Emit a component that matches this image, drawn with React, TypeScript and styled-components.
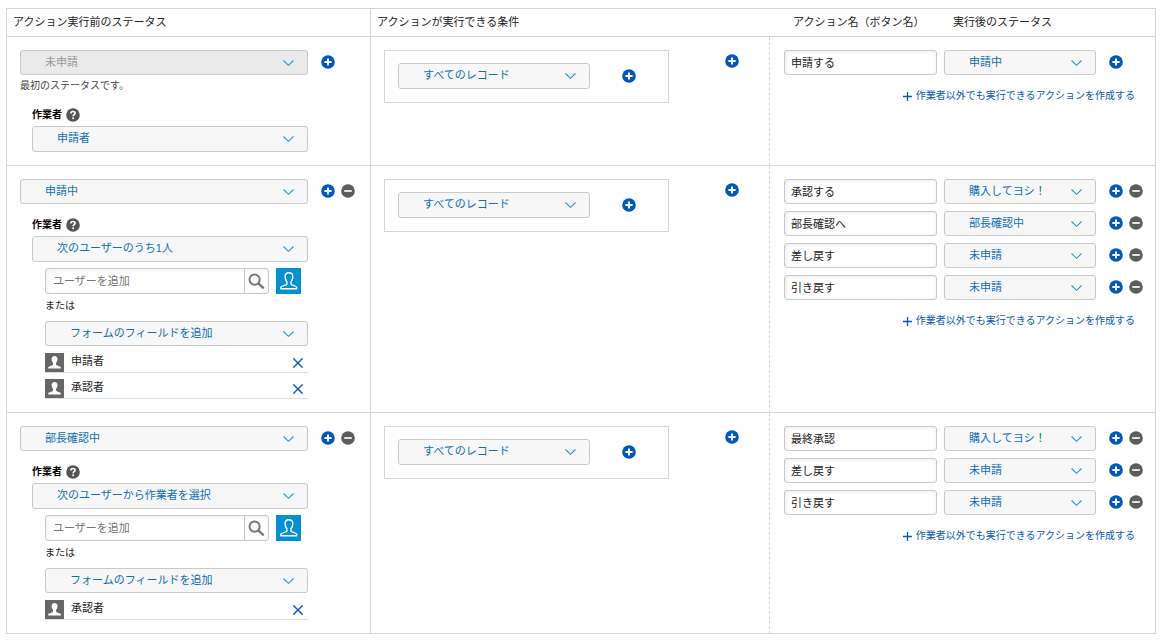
import React from "react";
import styled, { createGlobalStyle } from "styled-components";

const GlobalStyle = createGlobalStyle`
  * { box-sizing: border-box; }
  body {
    margin: 0;
    background: #fff;
    color: #222;
    font-family: "Liberation Sans", "Noto Sans CJK JP", sans-serif;
    font-size: 11px;
    line-height: 16px;
  }
  button, input, select { font: inherit; margin: 0; }
`;

const Page = styled.main`
  padding: 8px 6px;
`;

const FlowTable = styled.table`
  width: 100%;
  table-layout: fixed;
  border-collapse: separate;
  border-spacing: 0;
  border-top: 1px solid #d5d5d5;
  border-left: 1px solid #d5d5d5;
`;

const StatusCol = styled.col`
  width: 364px;
`;

const ConditionCol = styled.col`
  width: 399px;
`;

const HeadCell = styled.th<{ $open?: boolean; $inset?: number }>`
  padding: 5px 0 6px ${(p) => p.$inset ?? 6}px;
  border-bottom: 1px solid #d5d5d5;
  border-right: ${(p) => (p.$open ? "0" : "1px solid #d5d5d5")};
  font-weight: 400;
  text-align: left;
`;

const Cell = styled.td<{ $dashed?: boolean }>`
  padding: 13px 12px 13px 13px;
  vertical-align: top;
  border-bottom: 1px solid #d5d5d5;
  border-right: 1px ${(p) => (p.$dashed ? "dashed" : "solid")} #d5d5d5;
`;

const ActionCell = styled(Cell)`
  padding-left: 14px;
`;

const ActionHead = styled.div`
  display: grid;
  grid-template-columns: 1fr 152px 34px;
  column-gap: 7px;
  padding-right: 18px;

  span {
    padding-left: 9px;
    white-space: nowrap;
  }
`;

const StatusLayout = styled.div`
  display: grid;
  grid-template-columns: 1fr 34px;
  column-gap: 13px;
  padding-right: 3px;
`;

const IconPair = styled.div`
  display: flex;
  align-items: center;
  gap: 6px;
  height: 24px;
`;

const IconButton = styled.button`
  display: block;
  flex: none;
  padding: 0;
  border: 0;
  background: none;
  cursor: pointer;

  svg { display: block; }
`;

const SelectBox = styled.div<{ $tall?: boolean }>`
  position: relative;
  height: ${(p) => (p.$tall ? 26 : 25)}px;

  svg {
    position: absolute;
    top: 10px;
    right: 14px;
    pointer-events: none;
  }
`;

const SelectControl = styled.select`
  display: block;
  width: 100%;
  height: 100%;
  padding: 0 28px 2px 24px;
  appearance: none;
  border: 1px solid #c9c9c9;
  border-radius: 3px;
  background: #f7f7f7;
  color: #0d6fb8;
  line-height: 16px;

  &:disabled {
    background: #eaeaea;
    color: #999;
    opacity: 1;
  }
`;

const Note = styled.p`
  margin: 3px 0 0;
  font-size: 10px;
  line-height: 16px;
  color: #444;
`;

const Worker = styled.section`
  margin-top: 14px;
  padding-left: 12px;
`;

const WorkerHead = styled.div`
  display: flex;
  align-items: center;
  gap: 4px;
  height: 14px;
  margin-bottom: 4px;
  font-size: 10px;
  line-height: 14px;
`;

const WorkerTitle = styled.strong`
  font-weight: 700;
  color: #000;
`;

const Picker = styled.div`
  padding: 6px 0 0 13px;
`;

const SearchRow = styled.div`
  display: flex;
  gap: 7px;
  height: 26px;
`;

const SearchField = styled.div`
  display: flex;
  width: 224px;
  border: 1px solid #c9c9c9;
  border-radius: 3px;
  box-shadow: inset 1px 1px 4px #ececec;
`;

const SearchInput = styled.input`
  flex: 1;
  min-width: 0;
  padding: 0 7px 1px;
  border: 0;
  background: none;
  color: #333;

  &::placeholder {
    color: #757575;
    opacity: 1;
  }
`;

const SearchButton = styled(IconButton)`
  width: 24px;
  padding-left: 3px;
  border-left: 1px solid #c9c9c9;
`;

const DirectoryButton = styled(IconButton)`
  width: 25px;
  height: 26px;
  background: #0390d5;
`;

const OrText = styled.p`
  margin: 5px 0 8px;
  font-size: 10px;
  line-height: 14px;
`;

const FieldList = styled.ul`
  display: grid;
  gap: 6px;
  margin: 7px 0 0;
  padding: 0;
  list-style: none;
`;

const FieldItem = styled.li`
  display: flex;
  align-items: center;
  gap: 7px;
  height: 20px;
  padding-right: 5px;
  border-bottom: 1px solid #d8dfdf;

  svg { flex: none; display: block; }
`;

const FieldName = styled.span`
  flex: 1;
  padding-bottom: 4px;
`;

const ConditionLayout = styled.div`
  display: flex;
  gap: 56px;
`;

const ConditionBox = styled.div`
  display: flex;
  align-items: center;
  gap: 32px;
  width: 285px;
  height: 53px;
  padding: 12px 13px 13px;
  border: 1px solid #d5d5d5;
`;

const ConditionSelect = styled.div`
  width: 192px;
`;

const AddCondition = styled.div`
  padding-top: 4px;
`;

const ActionRow = styled.div`
  display: grid;
  grid-template-columns: 1fr 152px 34px;
  column-gap: 7px;
  margin-bottom: 7px;

  ${IconPair} { margin-left: 6px; }
`;

const ActionName = styled.input`
  width: 100%;
  min-width: 0;
  height: 25px;
  padding: 0 6px 1px;
  border: 1px solid #c9c9c9;
  border-radius: 3px;
  box-shadow: inset 1px 1px 4px #ececec;
  background: #fff;
  color: #222;
`;

const ActionList = styled.div`
  padding-right: 6px;
`;

const LinkRow = styled.div`
  display: flex;
  justify-content: flex-end;
  margin-top: 14px;
  padding-right: 8px;
`;

const AddLink = styled.a`
  display: flex;
  align-items: center;
  gap: 4px;
  font-size: 10px;
  line-height: 14px;
  white-space: nowrap;
  color: #0558b8;
  text-decoration: none;
`;

const AddButton = () => (
  <IconButton type="button" aria-label="追加">
    <svg width="14" height="14" viewBox="0 0 14 14">
      <circle cx="7" cy="7" r="6.8" fill="#0058bc" />
      <path d="M7 3.4v7.2M3.4 7h7.2" stroke="#fff" strokeWidth="1.9" />
    </svg>
  </IconButton>
);

const RemoveButton = () => (
  <IconButton type="button" aria-label="削除">
    <svg width="14" height="14" viewBox="0 0 14 14">
      <circle cx="7" cy="7" r="6.8" fill="#5c5c5c" />
      <path d="M3.2 7h7.6" stroke="#e6e6e6" strokeWidth="2" />
    </svg>
  </IconButton>
);

const HelpButton = () => (
  <IconButton type="button" aria-label="ヘルプ">
    <svg width="14" height="14" viewBox="0 0 14 14">
      <circle cx="7" cy="7" r="6.8" fill="#555" />
      <path
        d="M4.9 5.5C4.9 4.2 5.8 3.5 7 3.5s2.1.7 2.1 1.8c0 1.4-2 1.4-2 3"
        fill="none"
        stroke="#fff"
        strokeWidth="1.6"
      />
      <circle cx="7.1" cy="10.2" r="1" fill="#fff" />
    </svg>
  </IconButton>
);

const Dropdown = ({
  label,
  value,
  disabled,
  tall,
}: {
  label: string;
  value: string;
  disabled?: boolean;
  tall?: boolean;
}) => (
  <SelectBox $tall={tall}>
    <SelectControl aria-label={label} defaultValue={value} disabled={disabled}>
      <option>{value}</option>
    </SelectControl>
    <svg width="11" height="6" viewBox="0 0 11 6">
      <path d="M.5.5l5 4.8 5-4.8" fill="none" stroke="#2597d8" strokeWidth="1.1" />
    </svg>
  </SelectBox>
);

const UserSearch = () => (
  <SearchRow>
    <SearchField>
      <SearchInput type="text" aria-label="ユーザーを追加" placeholder="ユーザーを追加" />
      <SearchButton type="button" aria-label="検索">
        <svg width="17" height="17" viewBox="0 0 17 17">
          <circle cx="6.6" cy="6.6" r="5.1" fill="none" stroke="#777" strokeWidth="1.9" />
          <path d="M10.3 10.3l5.4 5" stroke="#777" strokeWidth="2.4" />
        </svg>
      </SearchButton>
    </SearchField>
    <DirectoryButton type="button" aria-label="ユーザーを選択">
      <svg width="25" height="26" viewBox="0 0 25 26">
        <path
          d="M12.9 4.8c-2.6 0-3.8 1.7-3.8 4 0 2.2.8 3.7 1.8 4.9v2.5c0 .9-5.9 1.6-6.1 2.9v1.7h15.9v-1.7c-.2-1.3-5.7-2-5.7-2.9v-2.5c1-1.2 1.8-2.7 1.8-4.9 0-2.3-1.3-4-3.9-4z"
          fill="none"
          stroke="#fff"
          strokeWidth="1.4"
          strokeLinejoin="round"
        />
      </svg>
    </DirectoryButton>
  </SearchRow>
);

const PersonTile = () => (
  <svg width="19" height="19" viewBox="0 0 19 19">
    <rect width="19" height="19" fill="#666" />
    <path
      d="M9.5 3C7.5 3 6.6 4.4 6.6 6.1c0 1.7.6 2.9 1.4 3.7v1.9C8 12.6 3.6 13 3.3 14.2V15.6h12.500v-1.4c-.3-1.2-4.7-1.6-4.7-2.5V9.8c.8-.8 1.4-2 1.4-3.700C12.500 4.400 11.500 3 9.500 3z"
      fill="#fff"
    />
  </svg>
);

type Step = {
  status: string;
  note?: string;
  worker: string;
  fields?: string[];
  actions: { name: string; next: string }[];
};

const steps: Step[] = [
  {
    status: "未申請",
    note: "最初のステータスです。",
    worker: "申請者",
    actions: [{ name: "申請する", next: "申請中" }],
  },
  {
    status: "申請中",
    worker: "次のユーザーのうち1人",
    fields: ["申請者", "承認者"],
    actions: [
      { name: "承認する", next: "購入してヨシ！" },
      { name: "部長確認へ", next: "部長確認中" },
      { name: "差し戻す", next: "未申請" },
      { name: "引き戻す", next: "未申請" },
    ],
  },
  {
    status: "部長確認中",
    worker: "次のユーザーから作業者を選択",
    fields: ["承認者"],
    actions: [
      { name: "最終承認", next: "購入してヨシ！" },
      { name: "差し戻す", next: "未申請" },
      { name: "引き戻す", next: "未申請" },
    ],
  },
];

const StepRow = ({ step }: { step: Step }) => {
  const first = step.note !== undefined;
  return (
    <tr>
      <Cell>
        <StatusLayout>
          <div>
            <Dropdown label="ステータス" value={step.status} disabled={first} />
            {step.note && <Note>{step.note}</Note>}
            <Worker>
              <WorkerHead>
                <WorkerTitle>作業者</WorkerTitle>
                <HelpButton />
              </WorkerHead>
              <Dropdown label="作業者" value={step.worker} tall />
              {step.fields && (
                <Picker>
                  <UserSearch />
                  <OrText>または</OrText>
                  <Dropdown label="フィールド" value="フォームのフィールドを追加" />
                  <FieldList>
                    {step.fields.map((field) => (
                      <FieldItem key={field}>
                        <PersonTile />
                        <FieldName>{field}</FieldName>
                        <IconButton type="button" aria-label="解除">
                          <svg width="10" height="10" viewBox="0 0 10 10">
                            <path d="M.4.4l9.2 9.2M9.6.4L.4 9.6" stroke="#0558b8" strokeWidth="1.4" />
                          </svg>
                        </IconButton>
                      </FieldItem>
                    ))}
                  </FieldList>
                </Picker>
              )}
            </Worker>
          </div>
          <IconPair>
            <AddButton />
            {!first && <RemoveButton />}
          </IconPair>
        </StatusLayout>
      </Cell>
      <Cell $dashed>
        <ConditionLayout>
          <ConditionBox>
            <ConditionSelect>
              <Dropdown label="条件" value="すべてのレコード" tall />
            </ConditionSelect>
            <AddButton />
          </ConditionBox>
          <AddCondition>
            <AddButton />
          </AddCondition>
        </ConditionLayout>
      </Cell>
      <ActionCell>
        <ActionList>
          {step.actions.map((action) => (
            <ActionRow key={action.name}>
              <ActionName type="text" aria-label="アクション名" defaultValue={action.name} />
              <Dropdown label="実行後のステータス" value={action.next} />
              <IconPair>
                <AddButton />
                {!first && <RemoveButton />}
              </IconPair>
            </ActionRow>
          ))}
        </ActionList>
        <LinkRow>
          <AddLink href="#">
            <svg width="9" height="9" viewBox="0 0 9 9">
              <path d="M4.5 0v9M0 4.5h9" stroke="#0558b8" strokeWidth="1.3" />
            </svg>
            作業者以外でも実行できるアクションを作成する
          </AddLink>
        </LinkRow>
      </ActionCell>
    </tr>
  );
};

export default function App() {
  return (
    <Page>
      <GlobalStyle />
      <FlowTable>
        <colgroup>
          <StatusCol />
          <ConditionCol />
          <col />
        </colgroup>
        <thead>
          <tr>
            <HeadCell>アクション実行前のステータス</HeadCell>
            <HeadCell $open>アクションが実行できる条件</HeadCell>
            <HeadCell $inset={14}>
              <ActionHead>
                <span>アクション名（ボタン名）</span>
                <span>実行後のステータス</span>
              </ActionHead>
            </HeadCell>
          </tr>
        </thead>
        <tbody>
          {steps.map((step) => (
            <StepRow key={step.status} step={step} />
          ))}
        </tbody>
      </FlowTable>
    </Page>
  );
}
